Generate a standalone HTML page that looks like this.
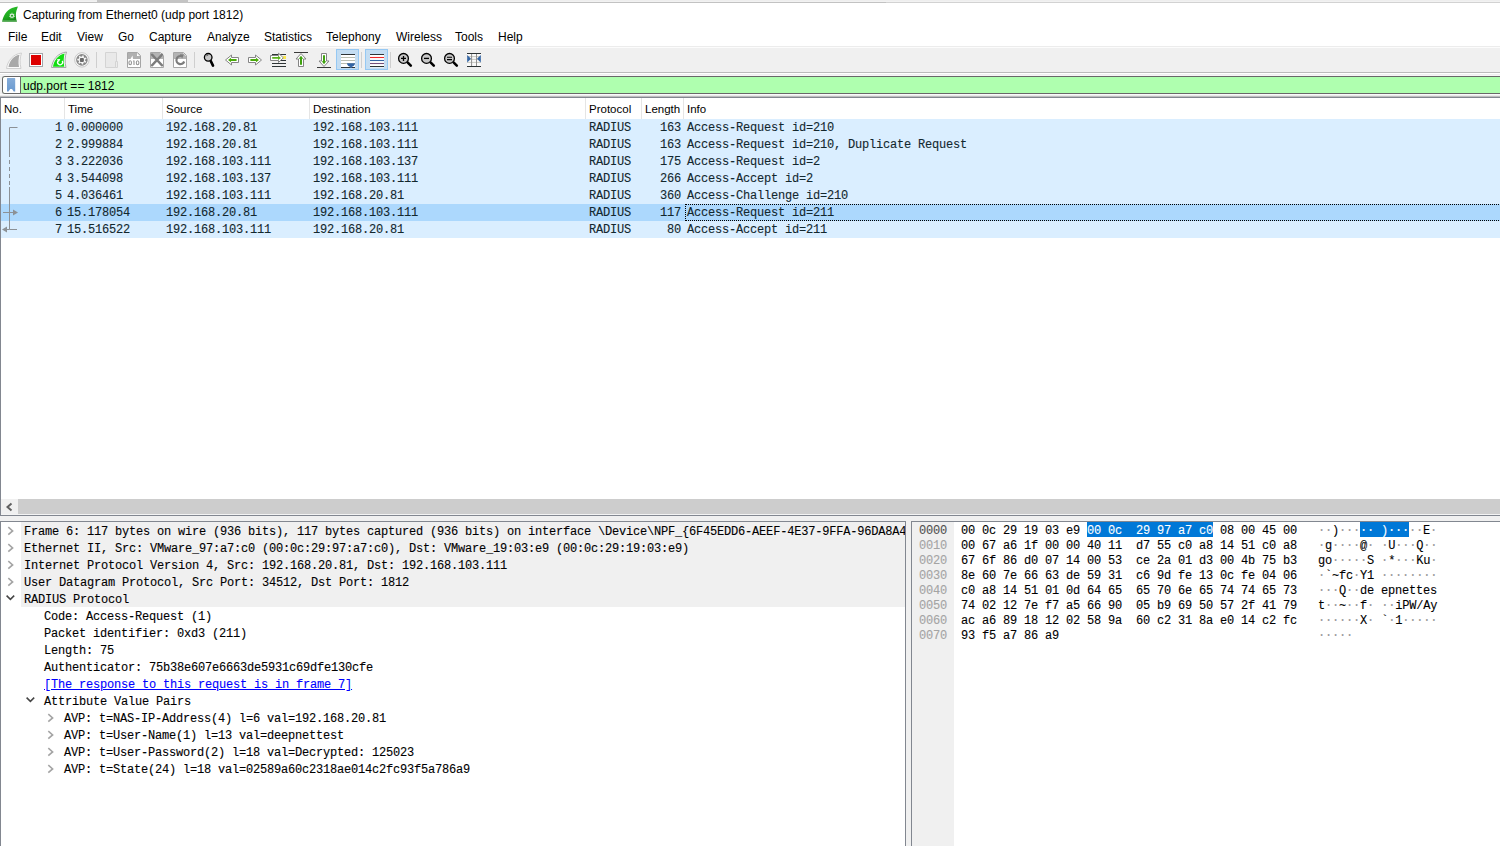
<!DOCTYPE html><html><head><meta charset="utf-8"><style>
html,body{margin:0;padding:0;width:1500px;height:846px;overflow:hidden;background:#fff;position:relative}
div{position:absolute;box-sizing:border-box}
.t{font-family:'Liberation Sans',sans-serif;font-size:12px;line-height:20px;white-space:pre;color:#000}
.m{font-family:'Liberation Mono',monospace;font-size:12px;letter-spacing:-0.2px;-webkit-text-stroke:0.1px;line-height:20px;white-space:pre;color:#000}
svg{position:absolute}
</style></head><body>
<div style="left:0px;top:0px;width:1500px;height:1px;background:#eeeeee;"></div>
<div style="left:0px;top:1px;width:1500px;height:1px;background:#f2f2f2;"></div>
<div style="left:0px;top:2px;width:886px;height:1px;background:#c2c2c2;"></div>
<div style="left:886px;top:2px;width:614px;height:1px;background:#d2d2d2;"></div>
<div style="left:97px;top:0px;width:91px;height:3px;background:#c4c4c4;"></div>
<svg style="left:2px;top:5px" width="17" height="18" viewBox="0 0 17 18">
<defs><linearGradient id="tg" x1="0" y1="0" x2="0.3" y2="1"><stop offset="0" stop-color="#2ec42e"/><stop offset="0.7" stop-color="#1ea81e"/><stop offset="1" stop-color="#148a14"/></linearGradient></defs>
<path d="M0.2 16.7 C1 11 4.5 5 10 3 C12.5 2 14.5 1.5 15.9 1.4 C15 4 14 6.5 13.9 9 C13.8 12 14.3 14.5 14.9 16.7 Z" fill="url(#tg)"/>
<path d="M1 15.3 H14.6 L14.9 16.7 H0.2Z" fill="#6fb56f" opacity="0.75"/>
<path d="M9.46 8.88 L9.53 7.84 L10.47 7.84 L10.54 8.88 L11.09 9.14 L11.95 8.55 L12.53 9.28 L11.76 9.98 L11.90 10.58 L12.89 10.88 L12.69 11.79 L11.66 11.63 L11.28 12.11 L11.66 13.08 L10.82 13.48 L10.31 12.58 L9.69 12.58 L9.18 13.48 L8.34 13.08 L8.72 12.11 L8.34 11.63 L7.31 11.79 L7.11 10.88 L8.10 10.58 L8.24 9.98 L7.47 9.28 L8.05 8.55 L8.91 9.14Z" fill="#e0f0e0"/>
<circle cx="10.0" cy="10.7" r="1" fill="#1a9a1a"/>
</svg>
<div class="t" style="left:23px;top:5px;font-size:12px;color:#000;">Capturing from Ethernet0 (udp port 1812)</div>
<div class="t" style="left:8px;top:27px;font-size:12px;color:#000;">File</div>
<div class="t" style="left:41px;top:27px;font-size:12px;color:#000;">Edit</div>
<div class="t" style="left:77px;top:27px;font-size:12px;color:#000;">View</div>
<div class="t" style="left:118px;top:27px;font-size:12px;color:#000;">Go</div>
<div class="t" style="left:149px;top:27px;font-size:12px;color:#000;">Capture</div>
<div class="t" style="left:207px;top:27px;font-size:12px;color:#000;">Analyze</div>
<div class="t" style="left:264px;top:27px;font-size:12px;color:#000;">Statistics</div>
<div class="t" style="left:326px;top:27px;font-size:12px;color:#000;">Telephony</div>
<div class="t" style="left:396px;top:27px;font-size:12px;color:#000;">Wireless</div>
<div class="t" style="left:455px;top:27px;font-size:12px;color:#000;">Tools</div>
<div class="t" style="left:498px;top:27px;font-size:12px;color:#000;">Help</div>
<div style="left:0px;top:46px;width:1500px;height:1px;background:#ececec;"></div>
<div style="left:0px;top:47px;width:1500px;height:1px;background:#fcfcfc;"></div>
<div style="left:0px;top:48px;width:1500px;height:24px;background:#f0f0f0;"></div>
<div style="left:0px;top:72px;width:1500px;height:1px;background:#bababa;"></div>
<div style="left:0px;top:73px;width:1500px;height:1px;background:#ffffff;"></div>
<div style="left:0px;top:74px;width:1500px;height:23px;background:#f0f0f0;"></div>
<div style="left:0px;top:75px;width:1500px;height:1px;background:#f6f6f6;"></div>
<div style="left:0px;top:94px;width:1500px;height:1px;background:#fafafa;"></div>
<div style="left:0px;top:95px;width:1500px;height:1px;background:#eaeaea;"></div>
<div style="left:0px;top:96px;width:1500px;height:1px;background:#bdbdbd;"></div>
<svg style="left:0;top:46px" width="500" height="26" viewBox="0 46 500 26">
<!-- 1 gray shark fin -->
<path d="M6.5 68.5 C7.5 61 13 54 21.5 53 C20 57 19.5 63 21 68.5 Z" fill="#fafafa" stroke="#d0d0d0" stroke-width="1"/>
<path d="M8.5 67 C9.5 61 13.5 56 19.5 54.8 C18.5 58 18.2 63 19 67 Z" fill="#a9a9a9"/>
<!-- 2 stop -->
<rect x="29.5" y="53.5" width="13" height="13" fill="#fff" stroke="#a2a6aa" stroke-width="1"/>
<rect x="31" y="55" width="10" height="10" fill="#dd0000"/>
<!-- 3 green fin -->
<path d="M51.5 67.5 C52.5 60 57.5 53 66.5 52 C65 56 64.5 62 66 67.5 Z" fill="#f4fff4" stroke="#a8a8a8" stroke-width="1"/>
<path d="M53 66.7 C54 60.5 58 55 64.6 53.5 C63.6 57 63.4 62.5 64.3 66.7 Z" fill="#11dd11"/>
<path d="M58.3 60.6 A2.5 2.5 0 1 0 62.2 60.9" fill="none" stroke="#fff" stroke-width="1.3"/>
<path d="M56.9 59.2 L60.3 59.0 L58.9 62.0 Z" fill="#fff"/>
<!-- 4 gear -->
<circle cx="81.9" cy="59.9" r="7.2" fill="#fcfcfc" stroke="#c6c6c6" stroke-width="1"/>
<circle cx="81.9" cy="59.9" r="5.8" fill="#878787"/>
<path d="M82.00 56.60 L82.59 55.25 L83.96 55.67 L83.68 57.12 L84.54 57.92 L85.97 57.54 L86.49 58.87 L85.18 59.56 L85.09 60.73 L86.28 61.61 L85.56 62.84 L84.21 62.25 L83.24 62.92 L83.30 64.39 L81.88 64.60 L81.50 63.18 L80.38 62.83 L79.26 63.79 L78.21 62.82 L79.09 61.63 L78.66 60.54 L77.21 60.26 L77.32 58.84 L78.79 58.78 L79.38 57.76 L78.70 56.46 L79.88 55.66 L80.84 56.78Z" fill="#f6f6f6"/>
<rect x="79.9" y="57.9" width="4" height="4" rx="1" fill="#6a6a6a"/>
<!-- sep -->
<rect x="96" y="52" width="1" height="16" fill="#cfcfcf"/>
<!-- 5 blank doc -->
<path d="M105.5 52.5H116.5V67.5H105.5Z" fill="#e9e9e9" stroke="#d4d4d4" stroke-width="1"/>
<path d="M115.5 61.5H117.5V67.5H115.5Z" fill="#ececec" stroke="#d4d4d4" stroke-width="1"/>
<!-- 6 file 010 -->
<path d="M127.5 52.5H137.5L140.5 55.5V67.5H127.5Z" fill="#fff" stroke="#a6a6a6" stroke-width="1"/>
<path d="M128 53H137L140 56V59H128Z" fill="#b0b0b0"/>
<path d="M137 53.5L139.5 56H137Z" fill="#fff"/>
<path d="M130.5 59 L132.5 55.5 L133 59Z" fill="#fff"/>
<g fill="none" stroke="#959595" stroke-width="1.1"><ellipse cx="130.2" cy="62.8" rx="1.3" ry="2"/><path d="M134 60.6V65M133.2 61.3L134 60.6"/><ellipse cx="137.6" cy="62.8" rx="1.3" ry="2"/></g>
<!-- 7 X file -->
<path d="M150.5 52.5H160.5L163.5 55.5V67.5H150.5Z" fill="#fff" stroke="#a6a6a6" stroke-width="1"/>
<path d="M151 53H160L163 56V59H151Z" fill="#b4b4b4"/>
<path d="M152 54.6L162 65.4M162 54.6L152 65.4" stroke="#7c7c7c" stroke-width="2.3" stroke-linecap="round"/>
<!-- 8 reload file -->
<path d="M173.5 52.5H183.5L186.5 55.5V67.5H173.5Z" fill="#fff" stroke="#a6a6a6" stroke-width="1"/>
<path d="M174 53H183L186 56V59H174Z" fill="#b4b4b4"/>
<path d="M181.5 56.2 A4 4 0 1 0 184.2 61.5" fill="none" stroke="#7c7c7c" stroke-width="2.2"/>
<path d="M179.8 54.2 L183.8 54.6 L182.2 58.4Z" fill="#7c7c7c"/>
<!-- sep -->
<rect x="194" y="52" width="1" height="16" fill="#cfcfcf"/>
<!-- 11 magnifier -->
<path d="M210.8 61.2 L213 65.6" stroke="#000" stroke-width="2.6" stroke-linecap="round"/>
<circle cx="208.2" cy="57.3" r="3.8" fill="#c8c8c8" stroke="#000" stroke-width="1.3"/>
<path d="M206.2 56.3 A2.2 2.2 0 0 1 208.3 55" stroke="#333" stroke-width="0.8" fill="none"/>
<!-- 12 left arrow -->
<path d="M225.5 60 L231.5 55 V57.5 H238.5 V62.5 H231.5 V65 Z" fill="#fff" stroke="#858585" stroke-width="1" stroke-linejoin="round"/>
<path d="M228 60 L231 57.8 V59.1 H236.6 V60.9 H231 V62.2 Z" fill="#4aaa0a"/>
<!-- 13 right arrow -->
<path d="M261.5 60 L255.5 55 V57.5 H248.5 V62.5 H255.5 V65 Z" fill="#fff" stroke="#858585" stroke-width="1" stroke-linejoin="round"/>
<path d="M259 60 L256 57.8 V59.1 H250.4 V60.9 H256 V62.2 Z" fill="#4aaa0a"/>
<!-- 14 go to packet -->
<g stroke="#2e3436" stroke-width="1">
<path d="M272 54.5H286M276 60.5H286M272 63.5H286M272 66.5H286"/>
</g>
<rect x="283" y="56" width="3" height="3" fill="#fce94f"/>
<path d="M283.3 57.8 L278.5 53.2 V55.5 H270.5 V60.5 H278.5 V62.5 Z" fill="#fff" stroke="#858585" stroke-width="1" stroke-linejoin="round"/>
<path d="M281 57.9 L278 55.8 V57 H272.2 V58.8 H278 V60 Z" fill="#5bb21c"/>
<!-- 15 first packet -->
<path d="M294 52.5H308" stroke="#3a3a3a" stroke-width="1"/>
<path d="M301 53.5 L306 59 H303.5 V66.5 H298.5 V59 H296 Z" fill="#fff" stroke="#858585" stroke-width="1" stroke-linejoin="round"/>
<path d="M301 55.8 L303.3 58.8 H302 V64.8 H300 V58.8 H298.7 Z" fill="#3fa20f"/>
<!-- 16 last packet -->
<path d="M317 67.5H331" stroke="#3a3a3a" stroke-width="1"/>
<path d="M324 66.5 L329 61 H326.5 V53.5 H321.5 V61 H319 Z" fill="#fff" stroke="#858585" stroke-width="1" stroke-linejoin="round"/>
<path d="M324 64.2 L326.3 61.2 H325 V55.2 H323 V61.2 H321.7 Z" fill="#3fa20f"/>
<!-- 17 autoscroll pressed -->
<rect x="336.5" y="49.5" width="22" height="20" fill="#c4ddf2" stroke="#95c8f3" stroke-width="1"/>
<rect x="341" y="54" width="14" height="14" fill="#fff"/>
<path d="M341 54.5H355M341 67.5H355" stroke="#2e3436" stroke-width="1"/>
<path d="M341 57.5H355M341 60.5H355M341 63.5H355" stroke="#babdb0" stroke-width="1"/>
<path d="M347 63.3 H355 C355 65.5 353 66.5 351.8 66.8 V68 H350.2 V66.8 C349 66.5 347 65.5 347 63.3Z" fill="#3465a4"/>
<!-- sep -->
<rect x="361" y="52" width="1" height="16" fill="#cfcfcf"/>
<!-- 19 colorize pressed -->
<rect x="365.5" y="49.5" width="22" height="20" fill="#c4ddf2" stroke="#95c8f3" stroke-width="1"/>
<rect x="370" y="54" width="14" height="13.5" fill="#fff"/>
<path d="M370 54.5H384M370 66.5H384" stroke="#2e3436" stroke-width="1.1"/>
<path d="M370 57.5H384" stroke="#ef2929" stroke-width="1.1"/>
<path d="M370 60.5H384" stroke="#3465a4" stroke-width="1.1"/>
<path d="M370 63.5H384" stroke="#75507b" stroke-width="1.1"/>
<!-- sep -->
<rect x="390" y="52" width="1" height="16" fill="#cfcfcf"/>
<!-- 21 zoom in -->
<g>
<path d="M407.8 62.6 L410.8 65.6" stroke="#000" stroke-width="2.6" stroke-linecap="round"/>
<circle cx="403.5" cy="58.4" r="4.9" fill="#c8c8c8" stroke="#000" stroke-width="1.3"/>
<path d="M401 58.4H406M403.5 55.9V60.9" stroke="#000" stroke-width="1.3"/>
</g>
<g>
<path d="M430.8 62.6 L433.8 65.6" stroke="#000" stroke-width="2.6" stroke-linecap="round"/>
<circle cx="426.5" cy="58.4" r="4.9" fill="#c8c8c8" stroke="#000" stroke-width="1.3"/>
<path d="M424 58.4H429" stroke="#000" stroke-width="1.3"/>
</g>
<g>
<path d="M453.8 62.6 L456.8 65.6" stroke="#000" stroke-width="2.6" stroke-linecap="round"/>
<circle cx="449.5" cy="58.4" r="4.9" fill="#c8c8c8" stroke="#000" stroke-width="1.3"/>
<path d="M447 57.2H452M447 59.6H452" stroke="#000" stroke-width="1.1"/>
</g>
<!-- 24 resize columns -->
<rect x="467" y="53.5" width="14" height="13" fill="#fafafa"/>
<path d="M467 56.6H481M467 59.4H481M467 62.4H481" stroke="#c8c8c0" stroke-width="1"/>
<path d="M471.6 53.5V66.5M476.5 53.5V66.5" stroke="#909090" stroke-width="1"/>
<path d="M467 53.5H481M467 66.5H481" stroke="#2e3436" stroke-width="1"/>
<path d="M467.2 55 L471 58.8 L467.2 62.5Z" fill="#3465a4"/>
<path d="M480.8 55 L477 58.8 L480.8 62.5Z" fill="#3465a4"/>
</svg>

<div style="left:2px;top:76px;width:1498px;height:18px;border:1px solid #686868;border-right:none;border-radius:3px 0 0 3px;background:#afffaf"></div>
<div style="left:3px;top:77px;width:17px;height:16px;background:#ffffff;border-radius:2px 0 0 2px"></div>
<div style="left:20px;top:77px;width:1px;height:16px;background:#686868;"></div>
<svg style="left:7px;top:78px" width="9" height="14" viewBox="0 0 9 14"><defs><linearGradient id="bm" x1="0" y1="0" x2="0" y2="1"><stop offset="0" stop-color="#85acd8"/><stop offset="1" stop-color="#6b9ad0"/></linearGradient></defs><path d="M0.6 0H7.6Q8.2 0 8.2 0.6V13.6H6.7L5 11.1H3.2L1.5 13.6H0V0.6Q0 0 0.6 0Z" fill="url(#bm)"/></svg>
<div class="t" style="left:23px;top:76px;font-size:12px;color:#000;">udp.port == 1812</div>
<div style="left:0px;top:97px;width:1500px;height:1px;background:#828790;"></div>
<div style="left:0px;top:97px;width:1px;height:419px;background:#828790;"></div>
<div style="left:64px;top:98px;width:1px;height:21px;background:#e5e5e5;"></div>
<div style="left:162px;top:98px;width:1px;height:21px;background:#e5e5e5;"></div>
<div style="left:309px;top:98px;width:1px;height:21px;background:#e5e5e5;"></div>
<div style="left:585px;top:98px;width:1px;height:21px;background:#e5e5e5;"></div>
<div style="left:641px;top:98px;width:1px;height:21px;background:#e5e5e5;"></div>
<div style="left:683px;top:98px;width:1px;height:21px;background:#e5e5e5;"></div>
<div class="t" style="left:4px;top:99px;font-size:11.5px;color:#000;">No.</div>
<div class="t" style="left:68px;top:99px;font-size:11.5px;color:#000;">Time</div>
<div class="t" style="left:166px;top:99px;font-size:11.5px;color:#000;">Source</div>
<div class="t" style="left:313px;top:99px;font-size:11.5px;color:#000;">Destination</div>
<div class="t" style="left:589px;top:99px;font-size:11.5px;color:#000;">Protocol</div>
<div class="t" style="left:645px;top:99px;font-size:11.5px;color:#000;">Length</div>
<div class="t" style="left:687px;top:99px;font-size:11.5px;color:#000;">Info</div>
<div style="left:1px;top:119px;width:1499px;height:17px;background:#daeeff;"></div>
<div style="left:1px;top:136px;width:1499px;height:17px;background:#daeeff;"></div>
<div style="left:1px;top:153px;width:1499px;height:17px;background:#daeeff;"></div>
<div style="left:1px;top:170px;width:1499px;height:17px;background:#daeeff;"></div>
<div style="left:1px;top:187px;width:1499px;height:17px;background:#daeeff;"></div>
<div style="left:1px;top:204px;width:1499px;height:17px;background:#acd8fd;"></div>
<div style="left:1px;top:221px;width:1499px;height:17px;background:#daeeff;"></div>
<div class="m" style="left:55px;top:118px;color:#12272e;">1</div>
<div class="m" style="left:67px;top:118px;color:#12272e;">0.000000</div>
<div class="m" style="left:166px;top:118px;color:#12272e;">192.168.20.81</div>
<div class="m" style="left:313px;top:118px;color:#12272e;">192.168.103.111</div>
<div class="m" style="left:589px;top:118px;color:#12272e;">RADIUS</div>
<div class="m" style="left:660px;top:118px;color:#12272e;">163</div>
<div class="m" style="left:687px;top:118px;color:#12272e;">Access-Request id=210</div>
<div class="m" style="left:55px;top:135px;color:#12272e;">2</div>
<div class="m" style="left:67px;top:135px;color:#12272e;">2.999884</div>
<div class="m" style="left:166px;top:135px;color:#12272e;">192.168.20.81</div>
<div class="m" style="left:313px;top:135px;color:#12272e;">192.168.103.111</div>
<div class="m" style="left:589px;top:135px;color:#12272e;">RADIUS</div>
<div class="m" style="left:660px;top:135px;color:#12272e;">163</div>
<div class="m" style="left:687px;top:135px;color:#12272e;">Access-Request id=210, Duplicate Request</div>
<div class="m" style="left:55px;top:152px;color:#12272e;">3</div>
<div class="m" style="left:67px;top:152px;color:#12272e;">3.222036</div>
<div class="m" style="left:166px;top:152px;color:#12272e;">192.168.103.111</div>
<div class="m" style="left:313px;top:152px;color:#12272e;">192.168.103.137</div>
<div class="m" style="left:589px;top:152px;color:#12272e;">RADIUS</div>
<div class="m" style="left:660px;top:152px;color:#12272e;">175</div>
<div class="m" style="left:687px;top:152px;color:#12272e;">Access-Request id=2</div>
<div class="m" style="left:55px;top:169px;color:#12272e;">4</div>
<div class="m" style="left:67px;top:169px;color:#12272e;">3.544098</div>
<div class="m" style="left:166px;top:169px;color:#12272e;">192.168.103.137</div>
<div class="m" style="left:313px;top:169px;color:#12272e;">192.168.103.111</div>
<div class="m" style="left:589px;top:169px;color:#12272e;">RADIUS</div>
<div class="m" style="left:660px;top:169px;color:#12272e;">266</div>
<div class="m" style="left:687px;top:169px;color:#12272e;">Access-Accept id=2</div>
<div class="m" style="left:55px;top:186px;color:#12272e;">5</div>
<div class="m" style="left:67px;top:186px;color:#12272e;">4.036461</div>
<div class="m" style="left:166px;top:186px;color:#12272e;">192.168.103.111</div>
<div class="m" style="left:313px;top:186px;color:#12272e;">192.168.20.81</div>
<div class="m" style="left:589px;top:186px;color:#12272e;">RADIUS</div>
<div class="m" style="left:660px;top:186px;color:#12272e;">360</div>
<div class="m" style="left:687px;top:186px;color:#12272e;">Access-Challenge id=210</div>
<div class="m" style="left:55px;top:203px;color:#12272e;">6</div>
<div class="m" style="left:67px;top:203px;color:#12272e;">15.178054</div>
<div class="m" style="left:166px;top:203px;color:#12272e;">192.168.20.81</div>
<div class="m" style="left:313px;top:203px;color:#12272e;">192.168.103.111</div>
<div class="m" style="left:589px;top:203px;color:#12272e;">RADIUS</div>
<div class="m" style="left:660px;top:203px;color:#12272e;">117</div>
<div class="m" style="left:687px;top:203px;color:#12272e;">Access-Request id=211</div>
<div class="m" style="left:55px;top:220px;color:#12272e;">7</div>
<div class="m" style="left:67px;top:220px;color:#12272e;">15.516522</div>
<div class="m" style="left:166px;top:220px;color:#12272e;">192.168.103.111</div>
<div class="m" style="left:313px;top:220px;color:#12272e;">192.168.20.81</div>
<div class="m" style="left:589px;top:220px;color:#12272e;">RADIUS</div>
<div class="m" style="left:667px;top:220px;color:#12272e;">80</div>
<div class="m" style="left:687px;top:220px;color:#12272e;">Access-Accept id=211</div>
<div style="left:685px;top:204px;width:816px;height:17px;border:1px dotted #000;border-right:none"></div>
<svg style="left:0;top:119px" width="20" height="119" viewBox="0 0 20 119">
<g stroke="#8c9196" stroke-width="1" fill="none">
<path d="M17.5 8.5H9.5V34"/>
<path d="M9.5 34V68" stroke-dasharray="4 3"/>
<path d="M9.5 68V110.5H17M6 110.5H9.5"/>
<path d="M3 93.5H14"/>
</g>
<path d="M13 90.5L18 93.5L13 96.5Z" fill="#8c9196"/>
<path d="M2 110.5L7 107.5L7 113.5Z" fill="#8c9196"/>
</svg>
<div style="left:1px;top:499px;width:1499px;height:15px;background:#f0f0f0;"></div>
<div style="left:18px;top:499px;width:1482px;height:15px;background:#cdcdcd;"></div>
<svg style="left:5px;top:502px" width="9" height="10" viewBox="0 0 9 10"><path d="M6.5 1.5L2.5 5L6.5 8.5" stroke="#606060" stroke-width="2" fill="none"/></svg>
<div style="left:1px;top:514px;width:1499px;height:1px;background:#f4f4f4;"></div>
<div style="left:0px;top:515px;width:1500px;height:1px;background:#828790;"></div>
<div style="left:0px;top:516px;width:1500px;height:5px;background:#f0f0f0;"></div>
<div style="left:0px;top:521px;width:906px;height:325px;background:#ffffff;border:1px solid #828790;border-bottom:none"></div>
<div style="left:21px;top:522px;width:884px;height:85px;background:#f0f0f0;"></div>
<div style="left:1px;top:522px;width:904px;height:324px;overflow:hidden">
<svg style="left:6px;top:4px" width="8" height="11" viewBox="0 0 8 11"><path d="M1.3 1.2L5.6 4.9L1.3 8.6" stroke="#a4a4a4" stroke-width="1.6" fill="none"/></svg>
<div class="m" style="left:23px;top:0px">Frame 6: 117 bytes on wire (936 bits), 117 bytes captured (936 bits) on interface \Device\NPF_{6F45EDD6-AEEF-4E37-9FFA-96DA8A4E8BEF}, id 0</div>
<svg style="left:6px;top:21px" width="8" height="11" viewBox="0 0 8 11"><path d="M1.3 1.2L5.6 4.9L1.3 8.6" stroke="#a4a4a4" stroke-width="1.6" fill="none"/></svg>
<div class="m" style="left:23px;top:17px">Ethernet II, Src: VMware_97:a7:c0 (00:0c:29:97:a7:c0), Dst: VMware_19:03:e9 (00:0c:29:19:03:e9)</div>
<svg style="left:6px;top:38px" width="8" height="11" viewBox="0 0 8 11"><path d="M1.3 1.2L5.6 4.9L1.3 8.6" stroke="#a4a4a4" stroke-width="1.6" fill="none"/></svg>
<div class="m" style="left:23px;top:34px">Internet Protocol Version 4, Src: 192.168.20.81, Dst: 192.168.103.111</div>
<svg style="left:6px;top:55px" width="8" height="11" viewBox="0 0 8 11"><path d="M1.3 1.2L5.6 4.9L1.3 8.6" stroke="#a4a4a4" stroke-width="1.6" fill="none"/></svg>
<div class="m" style="left:23px;top:51px">User Datagram Protocol, Src Port: 34512, Dst Port: 1812</div>
<svg style="left:5px;top:73px" width="10" height="8" viewBox="0 0 10 8"><path d="M0.6 0.6L4.4 4.4L8.2 0.6" stroke="#454545" stroke-width="1.5" fill="none"/></svg>
<div class="m" style="left:23px;top:68px">RADIUS Protocol</div>
<div class="m" style="left:43px;top:85px">Code: Access-Request (1)</div>
<div class="m" style="left:43px;top:102px">Packet identifier: 0xd3 (211)</div>
<div class="m" style="left:43px;top:119px">Length: 75</div>
<div class="m" style="left:43px;top:136px">Authenticator: 75b38e607e6663de5931c69dfe130cfe</div>
<div class="m" style="left:43px;top:153px;color:#0000ff;text-decoration:underline">[The response to this request is in frame 7]</div>
<svg style="left:25px;top:175px" width="10" height="8" viewBox="0 0 10 8"><path d="M0.6 0.6L4.4 4.4L8.2 0.6" stroke="#454545" stroke-width="1.5" fill="none"/></svg>
<div class="m" style="left:43px;top:170px">Attribute Value Pairs</div>
<svg style="left:46px;top:191px" width="8" height="11" viewBox="0 0 8 11"><path d="M1.3 1.2L5.6 4.9L1.3 8.6" stroke="#a4a4a4" stroke-width="1.6" fill="none"/></svg>
<div class="m" style="left:63px;top:187px">AVP: t=NAS-IP-Address(4) l=6 val=192.168.20.81</div>
<svg style="left:46px;top:208px" width="8" height="11" viewBox="0 0 8 11"><path d="M1.3 1.2L5.6 4.9L1.3 8.6" stroke="#a4a4a4" stroke-width="1.6" fill="none"/></svg>
<div class="m" style="left:63px;top:204px">AVP: t=User-Name(1) l=13 val=deepnettest</div>
<svg style="left:46px;top:225px" width="8" height="11" viewBox="0 0 8 11"><path d="M1.3 1.2L5.6 4.9L1.3 8.6" stroke="#a4a4a4" stroke-width="1.6" fill="none"/></svg>
<div class="m" style="left:63px;top:221px">AVP: t=User-Password(2) l=18 val=Decrypted: 125023</div>
<svg style="left:46px;top:242px" width="8" height="11" viewBox="0 0 8 11"><path d="M1.3 1.2L5.6 4.9L1.3 8.6" stroke="#a4a4a4" stroke-width="1.6" fill="none"/></svg>
<div class="m" style="left:63px;top:238px">AVP: t=State(24) l=18 val=02589a60c2318ae014c2fc93f5a786a9</div>
</div>
<div style="left:906px;top:521px;width:5px;height:325px;background:#f0f0f0;"></div>
<div style="left:911px;top:521px;width:589px;height:325px;background:#ffffff;border-left:1px solid #828790;border-top:1px solid #828790"></div>
<div style="left:912px;top:522px;width:42px;height:324px;background:#f0f0f0;"></div>
<div class="m" style="left:919px;top:521px;color:#505050;">0000</div>
<div style="left:1087px;top:522px;width:126px;height:15px;background:#0078d7;"></div>
<div style="left:1360px;top:522px;width:49px;height:15px;background:#0078d7;"></div>
<div class="m" style="left:961px;top:521px;color:#000;">00 0c 29 19 03 e9 </div>
<div class="m" style="left:1087px;top:521px;color:#fff;">00 0c  29 97 a7 c0</div>
<div class="m" style="left:1213px;top:521px;color:#000;"> 08 00 45 00</div>
<div class="m" style="left:1318px;top:521px;color:#000;"><span style="color:#999">·</span><span style="color:#999">·</span>)<span style="color:#999">·</span><span style="color:#999">·</span><span style="color:#999">·</span></div>
<div class="m" style="left:1360px;top:521px;color:#fff;">·· )···</div>
<div class="m" style="left:1409px;top:521px;color:#000;"><span style="color:#999">·</span><span style="color:#999">·</span>E<span style="color:#999">·</span></div>
<div class="m" style="left:919px;top:536px;color:#a4a4a4;">0010</div>
<div class="m" style="left:961px;top:536px;color:#000;">00 67 a6 1f 00 00 40 11  d7 55 c0 a8 14 51 c0 a8</div>
<div class="m" style="left:1318px;top:536px;color:#000;"><span style="color:#999">·</span>g<span style="color:#999">·</span><span style="color:#999">·</span><span style="color:#999">·</span><span style="color:#999">·</span>@<span style="color:#999">·</span> <span style="color:#999">·</span>U<span style="color:#999">·</span><span style="color:#999">·</span><span style="color:#999">·</span>Q<span style="color:#999">·</span><span style="color:#999">·</span></div>
<div class="m" style="left:919px;top:551px;color:#a4a4a4;">0020</div>
<div class="m" style="left:961px;top:551px;color:#000;">67 6f 86 d0 07 14 00 53  ce 2a 01 d3 00 4b 75 b3</div>
<div class="m" style="left:1318px;top:551px;color:#000;">go<span style="color:#999">·</span><span style="color:#999">·</span><span style="color:#999">·</span><span style="color:#999">·</span><span style="color:#999">·</span>S <span style="color:#999">·</span>*<span style="color:#999">·</span><span style="color:#999">·</span><span style="color:#999">·</span>Ku<span style="color:#999">·</span></div>
<div class="m" style="left:919px;top:566px;color:#a4a4a4;">0030</div>
<div class="m" style="left:961px;top:566px;color:#000;">8e 60 7e 66 63 de 59 31  c6 9d fe 13 0c fe 04 06</div>
<div class="m" style="left:1318px;top:566px;color:#000;"><span style="color:#999">·</span>`~fc<span style="color:#999">·</span>Y1 <span style="color:#999">·</span><span style="color:#999">·</span><span style="color:#999">·</span><span style="color:#999">·</span><span style="color:#999">·</span><span style="color:#999">·</span><span style="color:#999">·</span><span style="color:#999">·</span></div>
<div class="m" style="left:919px;top:581px;color:#a4a4a4;">0040</div>
<div class="m" style="left:961px;top:581px;color:#000;">c0 a8 14 51 01 0d 64 65  65 70 6e 65 74 74 65 73</div>
<div class="m" style="left:1318px;top:581px;color:#000;"><span style="color:#999">·</span><span style="color:#999">·</span><span style="color:#999">·</span>Q<span style="color:#999">·</span><span style="color:#999">·</span>de epnettes</div>
<div class="m" style="left:919px;top:596px;color:#a4a4a4;">0050</div>
<div class="m" style="left:961px;top:596px;color:#000;">74 02 12 7e f7 a5 66 90  05 b9 69 50 57 2f 41 79</div>
<div class="m" style="left:1318px;top:596px;color:#000;">t<span style="color:#999">·</span><span style="color:#999">·</span>~<span style="color:#999">·</span><span style="color:#999">·</span>f<span style="color:#999">·</span> <span style="color:#999">·</span><span style="color:#999">·</span>iPW/Ay</div>
<div class="m" style="left:919px;top:611px;color:#a4a4a4;">0060</div>
<div class="m" style="left:961px;top:611px;color:#000;">ac a6 89 18 12 02 58 9a  60 c2 31 8a e0 14 c2 fc</div>
<div class="m" style="left:1318px;top:611px;color:#000;"><span style="color:#999">·</span><span style="color:#999">·</span><span style="color:#999">·</span><span style="color:#999">·</span><span style="color:#999">·</span><span style="color:#999">·</span>X<span style="color:#999">·</span> `<span style="color:#999">·</span>1<span style="color:#999">·</span><span style="color:#999">·</span><span style="color:#999">·</span><span style="color:#999">·</span><span style="color:#999">·</span></div>
<div class="m" style="left:919px;top:626px;color:#a4a4a4;">0070</div>
<div class="m" style="left:961px;top:626px;color:#000;">93 f5 a7 86 a9</div>
<div class="m" style="left:1318px;top:626px;color:#000;"><span style="color:#999">·</span><span style="color:#999">·</span><span style="color:#999">·</span><span style="color:#999">·</span><span style="color:#999">·</span></div>
</body></html>
